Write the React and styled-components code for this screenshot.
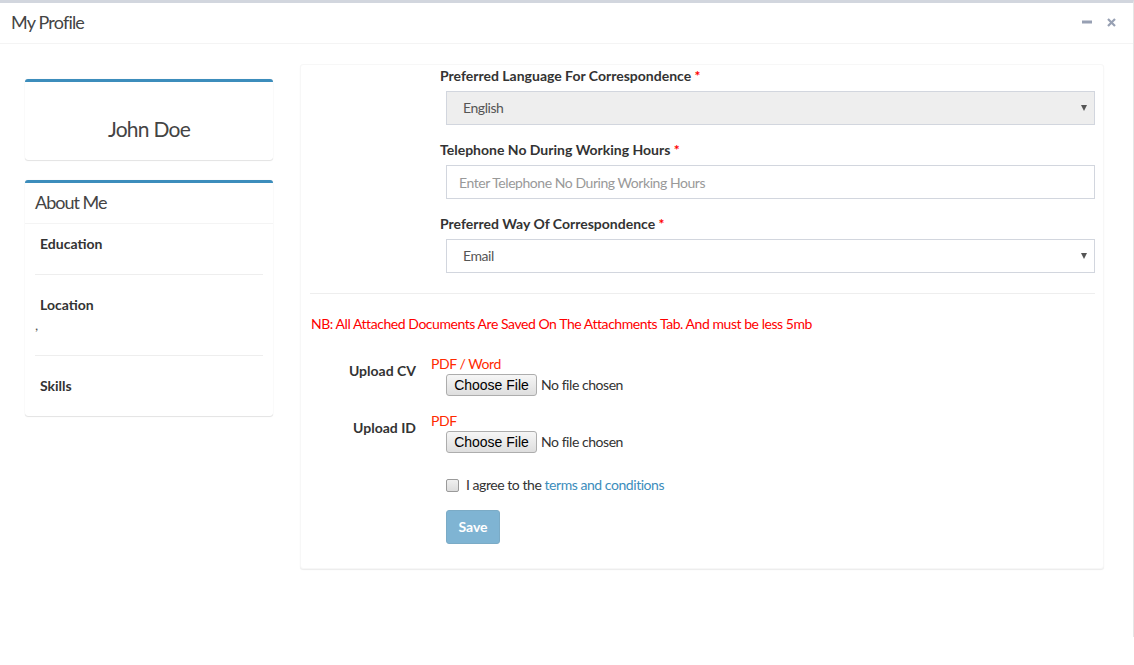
import React from "react";
import styled, { createGlobalStyle } from "styled-components";

const GlobalStyle = createGlobalStyle`
  html, body {
    margin: 0;
    padding: 0;
    background: #fff;
  }
  body {
    font-family: "Source Sans Pro", Lato, "Helvetica Neue", sans-serif;
    font-size: 14px;
    line-height: 20px;
    letter-spacing: -0.032em;
    color: #333;
  }
  strong, b, label { letter-spacing: 0; }
  * { box-sizing: border-box; }
`;

const Box = styled.div`
  width: 1134px;
  height: 637px;
  border-top: 3px solid #d2d6de;
  border-right: 1px solid #e6e6e6;
  background: #fff;
`;

const BoxHeader = styled.div`
  display: flex;
  align-items: center;
  height: 41px;
  padding: 0 17px 2px 10px;
  border-bottom: 1px solid #f4f4f4;
`;

const BoxTitle = styled.h3`
  flex: 1;
  margin: 0;
  font-size: 18px;
  font-weight: 400;
  letter-spacing: -0.045em;
  color: #444;
  padding-left: 1px;
`;

const Tools = styled.div`
  display: flex;
  align-items: center;
  gap: 15px;
  color: #97a0b3;
`;

const ToolButton = styled.button`
  display: flex;
  align-items: center;
  justify-content: center;
  padding: 0;
  border: 0;
  background: transparent;
  color: inherit;
  cursor: pointer;
`;

const Body = styled.div`
  display: flex;
  align-items: flex-start;
  padding: 20px 0 0 25px;
`;

const Sidebar = styled.div`
  width: 248px;
  margin-top: 15px;
  display: flex;
  flex-direction: column;
  gap: 20px;
`;

const Card = styled.div`
  background: #fff;
  border-top: 3px solid #3c8dbc;
  border-radius: 3px;
  box-shadow: 0 0 1px rgba(0, 0, 0, 0.12), 0 1px 1px rgba(0, 0, 0, 0.1);
`;

const UserName = styled.h3`
  margin: 0;
  padding: 32px 10px 16px;
  font-size: 21px;
  line-height: 30px;
  font-weight: 400;
  letter-spacing: -0.035em;
  text-align: center;
  color: #444;
`;

const CardHeader = styled.div`
  padding: 9px 10px 11px;
  border-bottom: 1px solid #f4f4f4;
  font-size: 18px;
  line-height: 20px;
  letter-spacing: -0.055em;
  color: #444;
`;

const CardBody = styled.div`
  padding: 10px 10px 20px;
`;

const InfoTitle = styled.strong`
  display: block;
  padding-left: 5px;
  font-weight: 700;
  color: #333;
`;

const InfoText = styled.p`
  margin: 0;
  color: #555;
  font-size: 14px;
`;

const Divider = styled.hr`
  margin: 20px 0;
  border: 0;
  border-top: 1px solid #eee;
`;

const Panel = styled.div`
  width: 804px;
  height: 505px;
  margin-left: 27px;
  padding: 1px 8px 0 9px;
  background: #fff;
  border: 1px solid #f7f7f7;
  border-radius: 3px;
  box-shadow: 0 1px 1px rgba(0, 0, 0, 0.08);
`;

const FieldGroup = styled.div`
  margin-left: 130px;
  margin-bottom: ${({ last }) => (last ? "0" : "15px")};
`;

const FieldLabel = styled.label`
  display: block;
  margin-bottom: 5px;
  font-weight: 700;
  color: #333;
`;

const Required = styled.span`
  color: #f00;
`;

const SelectWrap = styled.div`
  position: relative;
  margin-left: 6px;

  &::after {
    content: "";
    position: absolute;
    right: 8px;
    top: 14px;
    border-left: 3px solid transparent;
    border-right: 3px solid transparent;
    border-top: 6px solid #555;
    pointer-events: none;
  }
`;

const Select = styled.select`
  appearance: none;
  display: block;
  width: 649px;
  height: 34px;
  padding: 0 12px 0 16px;
  font: inherit;
  letter-spacing: inherit;
  color: #555;
  background: ${({ readOnlyLook }) => (readOnlyLook ? "#eee" : "#fff")};
  border: 1px solid #d2d6de;
  border-radius: 0;
  outline: none;
`;

const TextInput = styled.input`
  display: block;
  width: 649px;
  height: 34px;
  margin-left: 6px;
  padding: 0 12px;
  font: inherit;
  letter-spacing: inherit;
  color: #555;
  border: 1px solid #d2d6de;
  border-radius: 0;
  outline: none;

  &::placeholder {
    color: #999;
  }
`;

const Note = styled.p`
  margin: 0 0 20px;
  padding-left: 1px;
  color: #f00;
`;

const UploadRow = styled.div`
  display: flex;
  margin-bottom: 15px;
`;

const UploadLabel = styled.label`
  width: 106px;
  padding-top: 7px;
  text-align: right;
  font-weight: 700;
  color: #333;
`;

const UploadContent = styled.div`
  margin-left: 15px;
`;

const Hint = styled.div`
  color: #ff2a00;
`;

const FileInput = styled.input`
  display: block;
  height: 22px;
  margin-left: 15px;
  font: 14px "Source Sans Pro", Lato, sans-serif;
  letter-spacing: -0.032em;
  color: #333;

  &::file-selector-button {
    width: 91px;
    height: 22px;
    margin-right: 4px;
    padding: 0;
    font: 14px "Liberation Sans", Arial, sans-serif;
    letter-spacing: 0;
    color: #000;
    background: linear-gradient(#f6f6f6, #dedede);
    border: 1px solid #adadad;
    border-radius: 3px;
  }
`;

const CheckRow = styled.label`
  display: flex;
  align-items: center;
  gap: 7px;
  margin: 22px 0 0 136px;
  color: #333;
  letter-spacing: -0.032em;
`;

const CheckBox = styled.input`
  appearance: none;
  width: 13px;
  height: 13px;
  margin: 0;
  border: 1px solid #9a9a9a;
  border-radius: 2px;
  background: linear-gradient(#f0f0f0, #dcdcdc);
`;

const Link = styled.a`
  color: #3c8dbc;
  text-decoration: none;
`;

const SaveButton = styled.button`
  display: block;
  width: 54px;
  height: 34px;
  margin: 15px 0 0 136px;
  padding: 0;
  font: inherit;
  font-weight: 700;
  color: #fff;
  background: #3c8dbc;
  border: 1px solid #367fa9;
  border-radius: 3px;
  opacity: 0.65;
  cursor: not-allowed;
`;

const App = () => {
  return (
    <>
      <GlobalStyle />
      <Box>
        <BoxHeader>
          <BoxTitle>My Profile</BoxTitle>
          <Tools>
            <ToolButton aria-label="collapse">
              <svg width="10" height="10" viewBox="0 0 10 10">
                <rect x="0" y="3.5" width="10" height="3" fill="currentColor" />
              </svg>
            </ToolButton>
            <ToolButton aria-label="remove">
              <svg width="9" height="9" viewBox="0 0 9 9">
                <path d="M1 1 L8 8 M8 1 L1 8" stroke="currentColor" strokeWidth="2.2" />
              </svg>
            </ToolButton>
          </Tools>
        </BoxHeader>

        <Body>
          <Sidebar>
            <Card>
              <UserName>John Doe</UserName>
            </Card>

            <Card>
              <CardHeader>About Me</CardHeader>
              <CardBody>
                <InfoTitle>Education</InfoTitle>
                <InfoText></InfoText>
                <Divider />
                <InfoTitle>Location</InfoTitle>
                <InfoText>,</InfoText>
                <Divider />
                <InfoTitle>Skills</InfoTitle>
              </CardBody>
            </Card>
          </Sidebar>

          <Panel>
            <FieldGroup>
              <FieldLabel>
                Preferred Language For Correspondence <Required>*</Required>
              </FieldLabel>
              <SelectWrap>
                <Select readOnlyLook defaultValue="en">
                  <option value="en">English</option>
                </Select>
              </SelectWrap>
            </FieldGroup>

            <FieldGroup>
              <FieldLabel>
                Telephone No During Working Hours <Required>*</Required>
              </FieldLabel>
              <TextInput placeholder="Enter Telephone No During Working Hours" />
            </FieldGroup>

            <FieldGroup last>
              <FieldLabel>
                Preferred Way Of Correspondence <Required>*</Required>
              </FieldLabel>
              <SelectWrap>
                <Select defaultValue="email">
                  <option value="email">Email</option>
                </Select>
              </SelectWrap>
            </FieldGroup>

            <Divider />

            <Note>
              NB: All Attached Documents Are Saved On The Attachments Tab. And must be less 5mb
            </Note>

            <UploadRow>
              <UploadLabel>Upload CV</UploadLabel>
              <UploadContent>
                <Hint>PDF / Word</Hint>
                <FileInput type="file" />
              </UploadContent>
            </UploadRow>

            <UploadRow>
              <UploadLabel>Upload ID</UploadLabel>
              <UploadContent>
                <Hint>PDF</Hint>
                <FileInput type="file" />
              </UploadContent>
            </UploadRow>

            <CheckRow>
              <CheckBox type="checkbox" />
              <span>
                I agree to the <Link href="#">terms and conditions</Link>
              </span>
            </CheckRow>

            <SaveButton disabled>Save</SaveButton>
          </Panel>
        </Body>
      </Box>
    </>
  );
};

export default App;
